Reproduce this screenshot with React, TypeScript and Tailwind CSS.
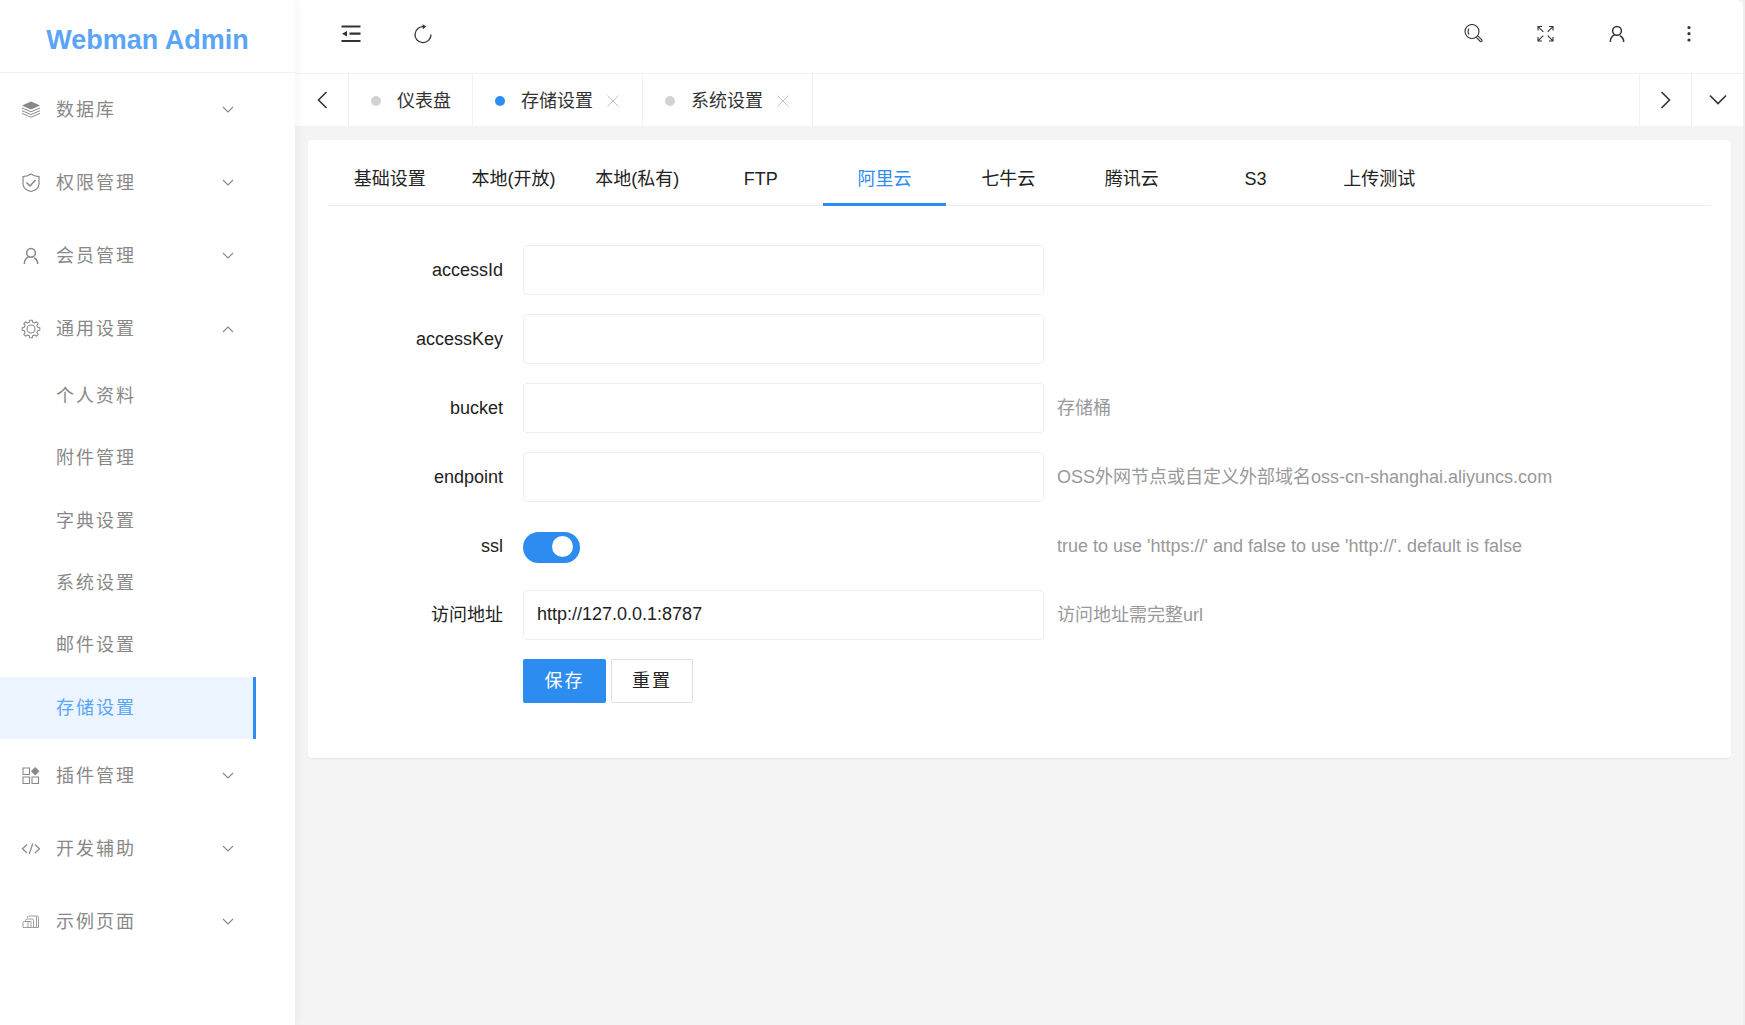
import React, { useState } from "react";

type IconProps = { className?: string };

const LayersIcon = () => (
  <svg width="20" height="20" viewBox="0 0 20 20" fill="none" stroke="currentColor">
    <path d="M10 1.500 19 5.500 10 9.500 1 5.500Z" fill="currentColor" stroke="none" />
    <path d="M1 8 10 11.800 19 8M1 10.700 10 14.500 19 10.700M1 13.400 10 17.200 19 13.400" strokeWidth="1" />
  </svg>
);

const ShieldIcon = () => (
  <svg width="20" height="20" viewBox="0 0 20 20" fill="none" stroke="currentColor" strokeWidth="1.2">
    <path d="M10 1C12 2.600 15 3.400 18 3.600V11C18 14.500 14.500 17.500 10 18.500 5.500 17.500 2 14.500 2 11V3.600C5 3.400 8 2.600 10 1Z" />
    <path d="m5.500 9.500 3.500 3.500 5.500-6" strokeWidth="1.5" />
  </svg>
);

const UserIcon = ({ className }: IconProps) => (
  <svg className={className} width="20" height="20" viewBox="0 0 20 20" fill="none" stroke="currentColor" strokeWidth="1.5">
    <circle cx="10" cy="6.800" r="4.400" />
    <path d="M3.300 18C3.300 14.600 5 12 7.500 10.900M13 11.800C15.500 13 16.700 15.300 16.700 18" />
  </svg>
);

const GearIcon = () => (
  <svg width="20" height="20" viewBox="0 0 20 20" fill="none" stroke="currentColor" strokeWidth="1.1" strokeLinejoin="round">
    <path d="M8.300 3.300 8.700 1.200h2.600l.4 2.100 1.800.8 1.900-1.300 1.800 1.800-1.300 1.900.8 1.800 2.100.4v2.600l-2.100.4-.8 1.800 1.300 1.900-1.800 1.800-1.900-1.300-1.800.8-.4 2.100H8.700l-.4-2.100-1.800-.8-1.900 1.300-1.800-1.800 1.300-1.900-.8-1.800-2.100-.4V8.700l2.100-.4.8-1.800-1.300-1.900 1.800-1.800 1.900 1.300Z" />
    <circle cx="10" cy="10" r="4" />
  </svg>
);

const PluginIcon = () => (
  <svg width="20" height="20" viewBox="0 0 20 20" fill="none" stroke="currentColor" strokeWidth="1.1">
    <path d="M2 2h6.500v6.500H2ZM2 11h6.500v6.500H2ZM11 11h6.500v6.500H11Z" />
    <path d="m14.200 1.200 4 4-4 4-4-4Z" fill="currentColor" stroke="currentColor" strokeWidth=".5" strokeLinejoin="round" />
  </svg>
);

const CodeIcon = () => (
  <svg width="20" height="20" viewBox="0 0 20 20" fill="none" stroke="currentColor" strokeWidth="1.2">
    <path d="M6 5.500 1.500 9.800 6 14M14 5.500 18.500 9.800 14 14M11.800 4.500 8.200 15.200" />
  </svg>
);

const PagesIcon = () => (
  <svg width="20" height="20" viewBox="0 0 20 20" fill="none" stroke="currentColor" strokeWidth=".8">
    <path d="M2.500 9.500h4.500v6H2v-5ZM4.500 9.500v-1l1-1.500H11q1.500 0 1.500 1.500v7H7M10 15.500v-6H7M6.500 6V5l1-1H16q1.500 0 1.500 1.500v10h-5M15.500 4.500v11" />
  </svg>
);

const Chevron = ({ className }: IconProps) => (
  <svg className={className} width="12" height="12" viewBox="0 0 12 12" fill="none" stroke="currentColor" strokeWidth="1.1">
    <path d="M1 3 6 8 11 3" />
  </svg>
);

const ArrowIcon = ({ className }: IconProps) => (
  <svg className={className} width="18" height="18" viewBox="0 0 18 18" fill="none" stroke="currentColor" strokeWidth="1.6">
    <path d="M1 4.500 9 12.500 17 4.500" />
  </svg>
);

const CloseIcon = () => (
  <svg width="12" height="12" viewBox="0 0 12 12" stroke="currentColor">
    <path d="M.5.5 11.500 11.500M11.500.5.5 11.500" />
  </svg>
);

const ShrinkIcon = () => (
  <svg width="20" height="20" viewBox="0 0 20 20" fill="none" stroke="currentColor" strokeWidth="2.2">
    <path d="M.5 2.500h19M8.500 9.700h11M.5 17h19" />
    <path d="M6 7v5.500L1 9.700Z" fill="currentColor" stroke="none" />
  </svg>
);

const RefreshIcon = () => (
  <svg width="20" height="20" viewBox="0 0 20 20" fill="none" stroke="currentColor" strokeWidth="1.3">
    <path d="M11.500 2.800A8 8 0 1 0 18 10.500" />
    <path d="M9.500.2 13.300 2.500 9.800 5.200Z" fill="currentColor" stroke="none" />
  </svg>
);

const SearchIcon = () => (
  <svg width="20" height="20" viewBox="0 0 20 20" fill="none" stroke="currentColor" strokeWidth="1.100">
    <circle cx="9" cy="7.500" r="7" />
    <path d="M6 4.500Q4.200 7.500 6 10.500M13.300 13.300l4 4.200q1 .5 1.500-.2.600-.7 0-1.500l-4-4" />
  </svg>
);

const FullscreenIcon = () => (
  <svg width="20" height="20" viewBox="0 0 20 20" fill="none" stroke="currentColor" strokeWidth="1.100">
    <path d="M3 6.500V2.500H7M3.300 2.800l5 5M14 2.500h4V6.500M17.700 2.800l-5 5M3 13v4H7M3.300 16.700l5-5M18 13v4H14M17.700 16.700l-5-5" />
  </svg>
);

const MoreIcon = () => (
  <svg width="20" height="20" viewBox="0 0 20 20" fill="currentColor">
    <circle cx="10" cy="3.500" r="1.600" />
    <circle cx="10" cy="9.700" r="1.600" />
    <circle cx="10" cy="16" r="1.600" />
  </svg>
);

const menu = [
  { title: "数据库", icon: <LayersIcon /> },
  { title: "权限管理", icon: <ShieldIcon /> },
  { title: "会员管理", icon: <UserIcon /> },
  {
    title: "通用设置",
    icon: <GearIcon />,
    children: ["个人资料", "附件管理", "字典设置", "系统设置", "邮件设置", "存储设置"],
  },
  { title: "插件管理", icon: <PluginIcon /> },
  { title: "开发辅助", icon: <CodeIcon /> },
  { title: "示例页面", icon: <PagesIcon /> },
];

const pageTabs = [
  { title: "仪表盘", closable: false },
  { title: "存储设置", closable: true },
  { title: "系统设置", closable: true },
];

const settingTabs = ["基础设置", "本地(开放)", "本地(私有)", "FTP", "阿里云", "七牛云", "腾讯云", "S3", "上传测试"];

const fields = [
  { name: "accessId", label: "accessId", hint: "" },
  { name: "accessKey", label: "accessKey", hint: "" },
  { name: "bucket", label: "bucket", hint: "存储桶" },
  { name: "endpoint", label: "endpoint", hint: "OSS外网节点或自定义外部域名oss-cn-shanghai.aliyuncs.com" },
  { name: "ssl", label: "ssl", hint: "true to use 'https://' and false to use 'http://'. default is false", type: "switch" },
  { name: "url", label: "访问地址", hint: "访问地址需完整url", value: "http://127.0.0.1:8787" },
];

const Sidebar = () => {
  const [opened, setOpened] = useState("通用设置");

  return (
    <aside className="z-10 w-[295px] shrink-0 bg-white shadow-[2px_0_8px_rgba(29,35,41,0.05)]">
      <h1 className="flex h-[73px] items-center justify-center border-b border-[#f2f2f2] pt-2 text-[27px] font-bold text-[#5aa5f7]">
        Webman Admin
      </h1>
      <nav className="w-64 text-lg tracking-[2px] text-[#888888]">
        {menu.map((item) => (
          <div key={item.title}>
            <button
              onClick={() => setOpened(opened === item.title ? "" : item.title)}
              className="flex h-[73px] w-full items-center pr-[22px] pl-[21px] tracking-[2px]"
            >
              {item.icon}
              <span className="ml-[15px] flex-1 text-left">{item.title}</span>
              <Chevron className={opened === item.title ? "rotate-180" : ""} />
            </button>
            {item.children && opened === item.title && (
              <div className="flex h-[374px] flex-col">
                {item.children.map((child) => (
                  <a
                    key={child}
                    href="#"
                    className={`flex flex-1 items-center pl-14 ${
                      child === "存储设置" ? "border-r-3 border-[#2d8cf0] bg-[#ecf4ff] text-[#5aa5f7]" : ""
                    }`}
                  >
                    {child}
                  </a>
                ))}
              </div>
            )}
          </div>
        ))}
      </nav>
    </aside>
  );
};

const Header = () => (
  <header className="flex h-[74px] items-center justify-between rounded-tr-lg border-b border-[#f2f2f2] bg-white pr-[18px] pb-[6px] pl-5 text-[#333333]">
    <div className="flex">
      <button aria-label="收起" className="flex w-[72px] justify-center"><ShrinkIcon /></button>
      <button aria-label="刷新" className="flex w-[72px] justify-center"><RefreshIcon /></button>
    </div>
    <div className="flex">
      <button aria-label="搜索" className="flex w-[72px] justify-center"><SearchIcon /></button>
      <button aria-label="全屏" className="flex w-[72px] justify-center"><FullscreenIcon /></button>
      <button aria-label="用户" className="flex w-[72px] justify-center"><UserIcon /></button>
      <button aria-label="更多" className="flex w-[72px] justify-center"><MoreIcon /></button>
    </div>
  </header>
);

const PageTabs = () => (
  <div className="flex h-[52px] bg-white text-[#333333]">
    <button aria-label="上一页" className="flex w-[54px] items-center justify-center border-r border-[#f2f2f2]">
      <ArrowIcon className="rotate-90" />
    </button>
    <div className="flex flex-1">
      {pageTabs.map((tab) => (
        <div key={tab.title} className="flex items-center border-r border-[#f2f2f2] pt-0.5 pr-[21px] pl-[22px]">
          <span className={`mr-4 size-[10px] rounded-full ${tab.title === "存储设置" ? "bg-[#2d8cf0]" : "bg-[#d2d2d2]"}`}></span>
          <a href="#">{tab.title}</a>
          {tab.closable && (
            <button aria-label="关闭" className="mr-0.5 ml-[14px] text-[#c2c2c2]"><CloseIcon /></button>
          )}
        </div>
      ))}
    </div>
    <button aria-label="下一页" className="flex w-[52px] items-center justify-center border-l border-[#f2f2f2]">
      <ArrowIcon className="-rotate-90" />
    </button>
    <button aria-label="展开" className="flex w-[52px] items-center justify-center border-l border-[#f2f2f2]">
      <ArrowIcon />
    </button>
  </div>
);

const SettingForm = () => {
  const [tab, setTab] = useState("阿里云");

  return (
    <section className="rounded-sm bg-white px-5 pt-3 pb-[55px] shadow-[0_1px_2px_rgba(0,0,0,0.05)]">
      <div className="border-b border-[#eeeeee]">
        <div role="tablist" className="-mb-px grid h-[54px] max-w-[1113px] grid-cols-9">
          {settingTabs.map((title) => (
            <button
              key={title}
              role="tab"
              aria-selected={tab === title}
              onClick={() => setTab(title)}
              className={`border-b-3 pt-0.5 ${
                tab === title ? "border-[#2d8cf0] text-[#2d8cf0]" : "border-transparent"
              }`}
            >
              {title}
            </button>
          ))}
        </div>
      </div>

      <form className="mt-[39px] flex flex-col gap-[19px]" onSubmit={(e) => e.preventDefault()}>
        {fields.map((field) => (
          <div key={field.name} className="flex h-[50px] items-center">
            <label htmlFor={field.name} className="w-[195px] pr-5 text-right">{field.label}</label>
            <div className="flex w-[521px]">
              {field.type === "switch" ? (
                <input
                  id={field.name}
                  type="checkbox"
                  role="switch"
                  defaultChecked
                  className="mt-0.5 h-[31px] w-[57px] appearance-none rounded-full bg-[#d2d2d2] px-[5px] pt-1 before:block before:size-[21px] before:rounded-full before:bg-white checked:bg-[#2d8cf0] checked:pl-[29px]"
                />
              ) : (
                <input
                  id={field.name}
                  type="text"
                  defaultValue={field.value}
                  className="h-[50px] w-full rounded-sm border border-[#eeeeee] px-[13px] pb-0.5 outline-none"
                />
              )}
            </div>
            <p className="ml-[13px] text-[#999999]">{field.hint}</p>
          </div>
        ))}
        <div className="ml-[195px] flex gap-[5px]">
          <button type="submit" className="h-11 w-[83px] rounded-xs bg-[#2d8cf0] tracking-[2px] text-white">保存</button>
          <button type="reset" className="h-11 w-[82px] rounded-xs border border-[#dcdfe6] tracking-[2px]">重置</button>
        </div>
      </form>
    </section>
  );
};

const App = () => {
  return (
    <div className="flex min-h-screen border-r-2 border-[#eeeeee] bg-[#f4f4f4] font-['Liberation_Sans','Noto_Sans_CJK_SC',sans-serif] text-lg text-[#222222]">
      <Sidebar />
      <div className="flex min-w-0 flex-1 flex-col">
        <Header />
        <PageTabs />
        <main className="py-[14px] pr-3 pl-[13px]">
          <SettingForm />
        </main>
      </div>
    </div>
  );
};

export default App;
